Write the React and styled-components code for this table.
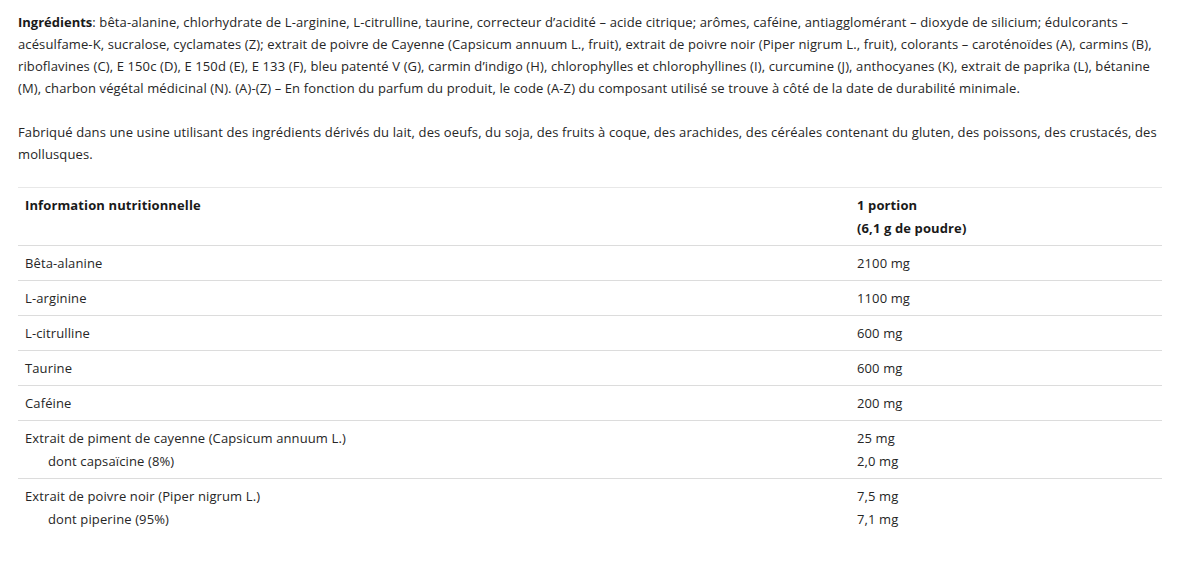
import React from "react";
import styled, { createGlobalStyle } from "styled-components";

const GlobalStyle = createGlobalStyle`
    html, body {
        margin: 0;
        padding: 0;
        background: #ffffff;
    }
    body {
        font-family: "Open Sans", "Liberation Sans", sans-serif;
        color: #262626;
    }
`;

const ingredientLines = [
    <>
        <b>Ingrédients</b>: bêta-alanine, chlorhydrate de L-arginine, L-citrulline, taurine, correcteur d’acidité – acide citrique; arômes, caféine, antiagglomérant – dioxyde de silicium; édulcorants –
    </>,
    "acésulfame-K, sucralose, cyclamates (Z); extrait de poivre de Cayenne (Capsicum annuum L., fruit), extrait de poivre noir (Piper nigrum L., fruit), colorants – caroténoïdes (A), carmins (B),",
    "riboflavines (C), E 150c (D), E 150d (E), E 133 (F), bleu patenté V (G), carmin d’indigo (H), chlorophylles et chlorophyllines (I), curcumine (J), anthocyanes (K), extrait de paprika (L), bétanine",
    "(M), charbon végétal médicinal (N). (A)-(Z) – En fonction du parfum du produit, le code (A-Z) du composant utilisé se trouve à côté de la date de durabilité minimale.",
];

const factoryLines = [
    "Fabriqué dans une usine utilisant des ingrédients dérivés du lait, des oeufs, du soja, des fruits à coque, des arachides, des céréales contenant du gluten, des poissons, des crustacés, des",
    "mollusques.",
];

const rows = [
    { name: ["Bêta-alanine"], value: ["2100 mg"] },
    { name: ["L-arginine"], value: ["1100 mg"] },
    { name: ["L-citrulline"], value: ["600 mg"] },
    { name: ["Taurine"], value: ["600 mg"] },
    { name: ["Caféine"], value: ["200 mg"] },
    {
        name: ["Extrait de piment de cayenne (Capsicum annuum L.)", "dont capsaïcine (8%)"],
        value: ["25 mg", "2,0 mg"],
    },
    {
        name: ["Extrait de poivre noir (Piper nigrum L.)", "dont piperine (95%)"],
        value: ["7,5 mg", "7,1 mg"],
        last: true,
    },
];

const App = () => {
    return (
        <Page>
            <GlobalStyle />
            <Paragraph>
                {ingredientLines.map((line, i) => (
                    <Line key={i}>{line}</Line>
                ))}
            </Paragraph>
            <Paragraph>
                {factoryLines.map((line, i) => (
                    <Line key={i}>{line}</Line>
                ))}
            </Paragraph>

            <Table>
                <HeaderRow>
                    <Cell $bold>
                        <Line>Information nutritionnelle</Line>
                    </Cell>
                    <Cell $bold>
                        <Line>1 portion</Line>
                        <Line>(6,1 g de poudre)</Line>
                    </Cell>
                </HeaderRow>
                {rows.map((row, i) => (
                    <Row key={i} $last={row.last}>
                        <Cell $multi={row.name.length > 1}>
                            {row.name.map((text, j) => (
                                <Line key={j} $indent={j > 0}>
                                    {text}
                                </Line>
                            ))}
                        </Cell>
                        <Cell $multi={row.value.length > 1}>
                            {row.value.map((text, j) => (
                                <Line key={j}>{text}</Line>
                            ))}
                        </Cell>
                    </Row>
                ))}
            </Table>
        </Page>
    );
};

export default App;

const Page = styled.div`
    padding: 11px 18px 0 18px;
    font-size: 13px;
    letter-spacing: 0.12px;
    line-height: 22px;
`;

const Paragraph = styled.div`
    margin-bottom: 22px;

    &:last-of-type {
        margin-bottom: 18px;
    }

    b {
        font-weight: 700;
        letter-spacing: 0;
        color: #1a1a1a;
    }
`;

const Line = styled.span`
    display: block;
    white-space: nowrap;
    padding-left: ${(props) => (props.$indent ? "23px" : "0")};
`;

const Table = styled.div`
    width: 1144px;
    border-top: 1px solid #e8e8e8;
`;

const Row = styled.div`
    display: grid;
    grid-template-columns: 832px 1fr;
    border-bottom: ${(props) => (props.$last ? "none" : "1px solid #dcdcdc")};
`;

const HeaderRow = styled(Row)`
    border-bottom: 1px solid #dcdcdc;
`;

const Cell = styled.div`
    padding: 6px 7px 5.5px;
    line-height: ${(props) => (props.$multi ? "23px" : "22.5px")};
    font-weight: ${(props) => (props.$bold ? 700 : 400)};
    color: ${(props) => (props.$bold ? "#1a1a1a" : "#262626")};
`;
